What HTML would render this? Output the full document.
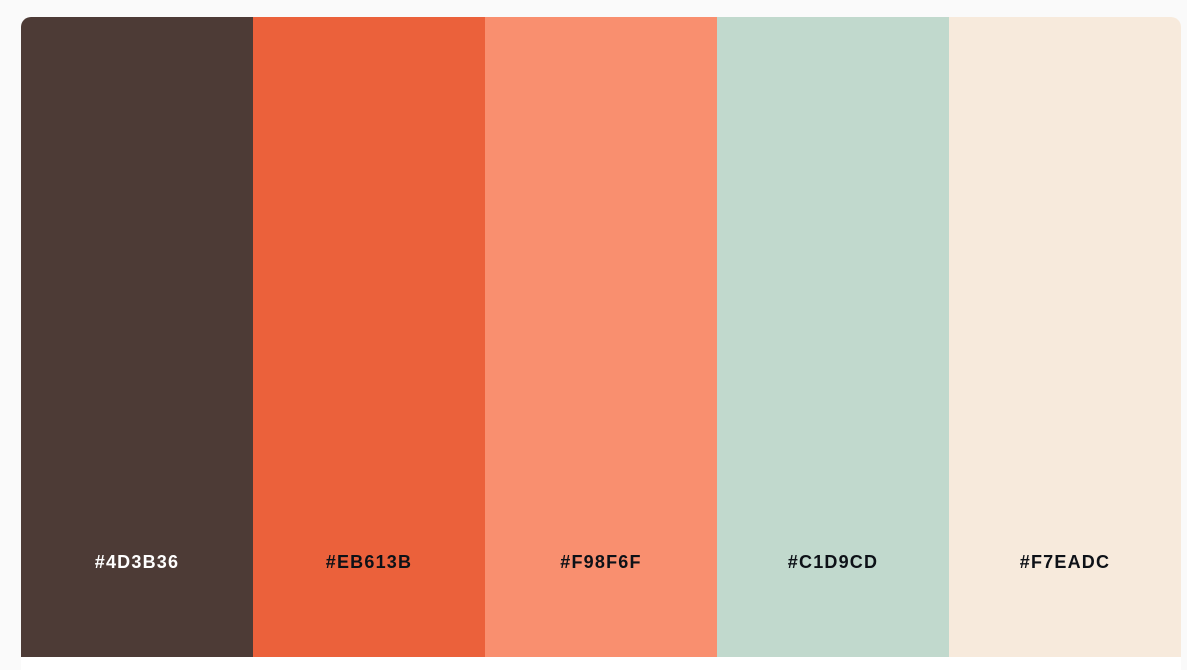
<!DOCTYPE html>
<html><head><style>
html,body{margin:0;padding:0;width:1187px;height:670px;overflow:hidden;background:#fafafa;font-family:"Liberation Sans",sans-serif}
.card{position:absolute;left:21px;top:17px;width:1160px;height:653px;background:#fff;border-radius:10px 10px 0 0;overflow:hidden}
.row{display:flex;height:640px}
.s{width:232px;height:640px;position:relative}
.s span{position:absolute;left:0;right:0;top:535px;text-align:center;font-weight:bold;font-size:18px;letter-spacing:1.2px;color:#0d1117}
</style></head><body>
<div class="card"><div class="row">
<div class="s" style="background:#4d3b36"><span style="color:#fff">#4D3B36</span></div>
<div class="s" style="background:#eb613b"><span>#EB613B</span></div>
<div class="s" style="background:#f98f6f"><span>#F98F6F</span></div>
<div class="s" style="background:#c1d9cd"><span>#C1D9CD</span></div>
<div class="s" style="background:#f7eadc"><span>#F7EADC</span></div>
</div></div>
</body></html>
